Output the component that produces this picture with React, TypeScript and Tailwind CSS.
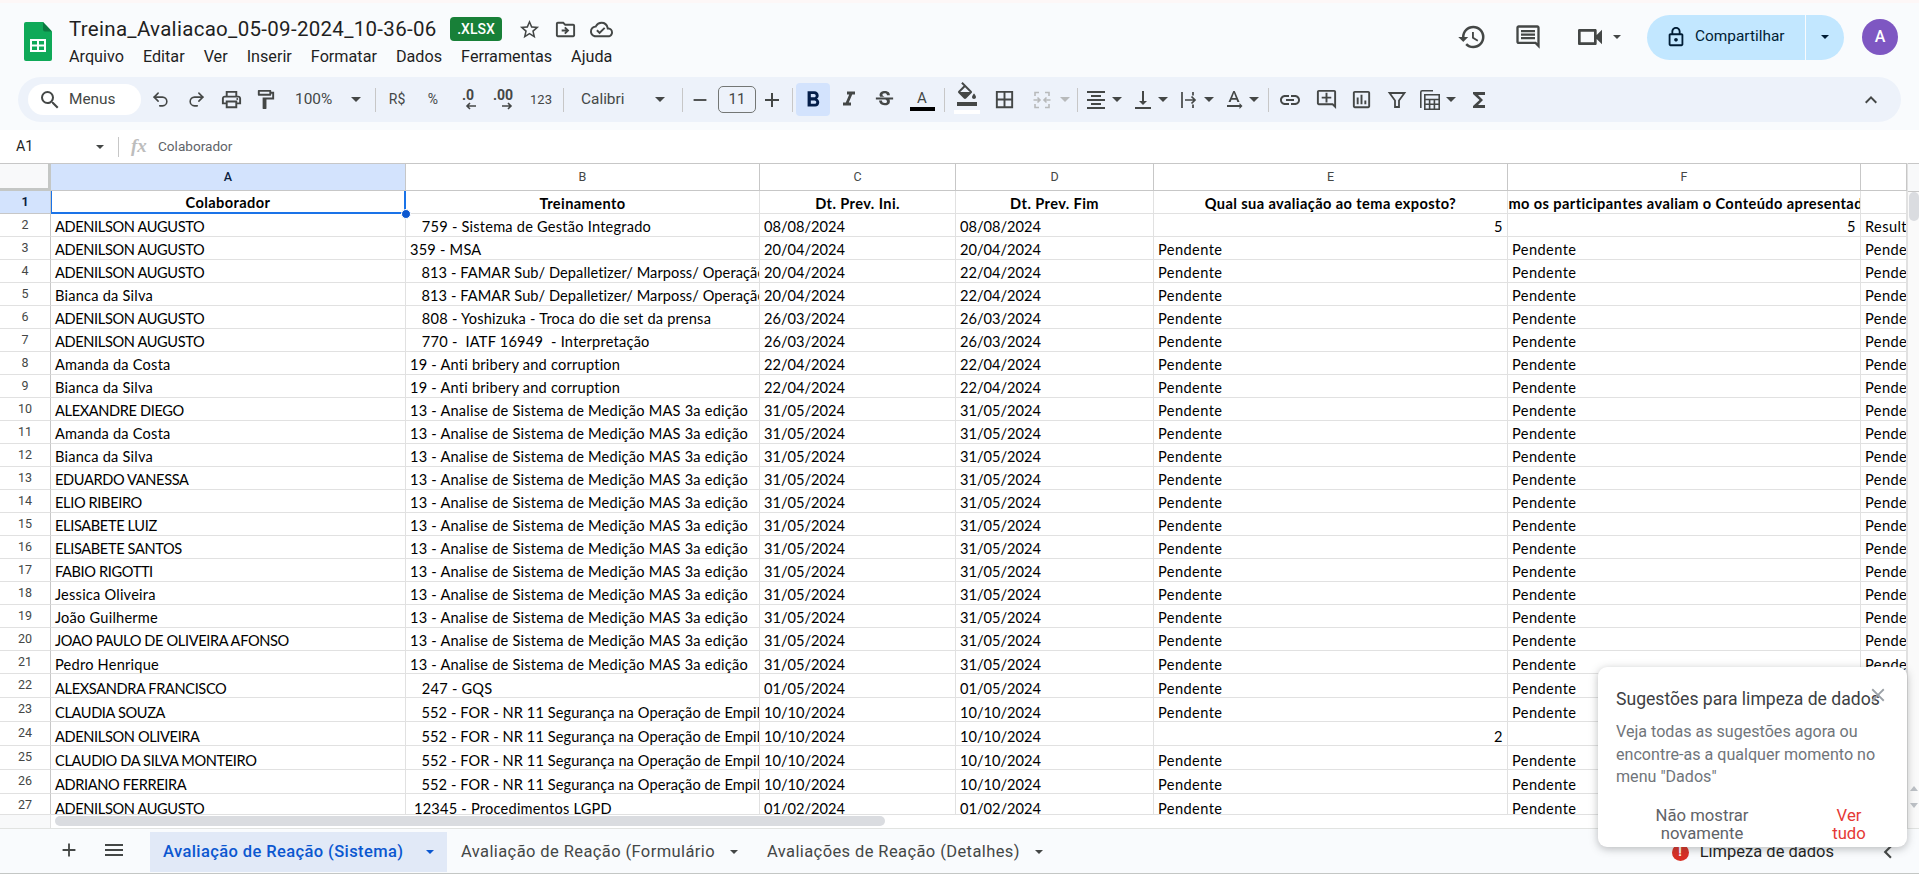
import React from "react";
import { Undo2, Redo2 } from "lucide-react";
import {
  MdSearch, MdOutlinePrint, MdOutlineFormatPaint, MdFormatBold, MdFormatItalic, MdStrikethroughS,
  MdFormatColorFill, MdBorderAll, MdFormatAlignCenter, MdVerticalAlignBottom, MdTextRotationNone,
  MdLink, MdOutlineAddComment, MdOutlineInsertChart, MdFunctions, MdKeyboardArrowUp, MdHistory,
  MdOutlineComment, MdOutlineVideocam, MdOutlineLock, MdOutlineCloudDone, MdStarBorder,
  MdOutlineDriveFileMove, MdMenu, MdAdd, MdRemove, MdClose, MdChevronLeft,
} from "react-icons/md";

const Caret = ({ className = "text-[#444746]", small = false }: { className?: string; small?: boolean }) => (
  <svg width={small ? 8 : 10} height={small ? 4 : 5} viewBox="0 0 10 5" className={className}>
    <path d="M0 0h10L5 5z" fill="currentColor" />
  </svg>
);

const Ic = ({ children, className = "" }: { children: React.ReactNode; className?: string }) => (
  <div className={`w-[24px] h-[24px] flex items-center justify-center text-[#444746] shrink-0 ${className}`}>{children}</div>
);

const Sep = ({ className }: { className: string }) => <div className={`w-px h-[24px] bg-[#c7c7c7] shrink-0 ${className}`} />;

const Logo = () => (
  <svg width="28" height="39" viewBox="0 0 28 39">
    <path d="M2 0h17l9 9.5V37a2 2 0 0 1-2 2H2a2 2 0 0 1-2-2V2a2 2 0 0 1 2-2z" fill="#0fa958" />
    <path d="M19 0l9 9.5h-7a2 2 0 0 1-2-2z" fill="#0b7a41" />
    <path d="M6 17h16v13H6z" fill="#fff" />
    <path d="M8 19h5v3.5H8zM15 19h5v3.5h-5zM8 24.5h5V28H8zM15 24.5h5V28h-5z" fill="#0fa958" />
  </svg>
);

const MergeIcon = () => (
  <svg width="22" height="22" viewBox="0 0 22 22" fill="none" stroke="#b8babb" strokeWidth="1.6">
    <path d="M4 7V3.5h4M14 3.5h4V7M4 15v3.5h4M14 18.5h4V15" />
    <path d="M2.5 11h6M6.5 8.5L9 11l-2.5 2.5M19.5 11h-6M15.5 8.5L13 11l2.5 2.5" />
  </svg>
);
const WrapIcon = () => (
  <svg width="22" height="22" viewBox="0 0 22 22" fill="none" stroke="#444746" strokeWidth="1.7">
    <path d="M4 3v16M15 3v3.5M15 15.5V19M7 11h10M13.5 7.5L17 11l-3.5 3.5" />
  </svg>
);
const FilterIcon = () => (
  <svg width="22" height="22" viewBox="0 0 22 22" fill="none" stroke="#444746" strokeWidth="1.8">
    <path d="M3.5 4h15L13 11.5V18H9v-6.5z" strokeLinejoin="miter" />
  </svg>
);
const CalcIcon = () => (
  <svg width="24" height="24" viewBox="0 0 24 24" fill="none" stroke="#444746" strokeWidth="1.6">
    <path d="M15 2.8H4.2a1.4 1.4 0 0 0-1.4 1.4V20" />
    <path d="M6.8 6.8h14.4v14.4H6.8z" />
    <path d="M6.8 11.5h14.4M6.8 16.3h14.4M11.6 11.5v9.7M16.4 11.5v9.7" />
  </svg>
);
const DecIcon = ({ label, right }: { label: string; right?: boolean }) => (
  <div className="flex flex-col items-center leading-none text-[#444746]">
    <span className="text-[14px] font-bold leading-[13px] font-['Roboto',sans-serif]">{label}</span>
    <svg width="12" height="8" viewBox="0 0 12 8" fill="none" stroke="#444746" strokeWidth="1.6" className={right ? "ml-[8px]" : "ml-[6px]"}>
      {right ? <path d="M1 4h9M7 1l3 3-3 3" /> : <path d="M11 4H2M5 1L2 4l3 3" />}
    </svg>
  </div>
);

const Toolbar = () => (
  <div className="ml-[18px] w-[1883px] h-[45px] rounded-[23px] bg-[#edf2fa] flex items-center font-['Roboto',sans-serif] text-[#444746]">
    <div className="ml-[10px] w-[113px] h-[31px] rounded-full bg-white flex items-center pl-[10px] shrink-0">
      <MdSearch size={24} className="text-[#444746]" />
      <span className="ml-[7px] text-[15.4px]">Menus</span>
    </div>
    <Ic className="ml-[7px]"><Undo2 size={19} strokeWidth={2} /></Ic>
    <Ic className="ml-[12px]"><Redo2 size={19} strokeWidth={2} /></Ic>
    <Ic className="ml-[11px]"><MdOutlinePrint size={23} /></Ic>
    <Ic className="ml-[10px]"><MdOutlineFormatPaint size={23} /></Ic>
    <span className="ml-[18px] w-[41px] text-[15.4px] shrink-0">100%</span>
    <div className="ml-[15px]"><Caret /></div>
    <Sep className="ml-[14px]" />
    <Ic className="ml-[9px] text-[14px]">R$</Ic>
    <Ic className="ml-[12px] text-[14px]">%</Ic>
    <Ic className="ml-[11px]"><DecIcon label=".0" /></Ic>
    <Ic className="ml-[11px]"><DecIcon label=".00" right /></Ic>
    <Ic className="ml-[14px] text-[13px]">123</Ic>
    <Sep className="ml-[10px]" />
    <span className="ml-[17px] w-[60px] text-[15.4px] shrink-0">Calibri</span>
    <div className="ml-[14px]"><Caret /></div>
    <Sep className="ml-[17px]" />
    <Ic className="ml-[5px]"><MdRemove size={22} /></Ic>
    <div className="ml-[6px] w-[38px] h-[27px] rounded-[5px] border border-[#747775] flex items-center justify-center text-[15px] shrink-0">11</div>
    <Ic className="ml-[4px]"><MdAdd size={24} /></Ic>
    <Sep className="ml-[8px]" />
    <div className="ml-[3px] w-[34px] h-[33px] rounded-[4px] bg-[#d3e3fd] flex items-center justify-center text-[#041e49] shrink-0"><MdFormatBold size={26} /></div>
    <Ic className="ml-[7px]"><MdFormatItalic size={25} /></Ic>
    <Ic className="ml-[11px]"><MdStrikethroughS size={23} /></Ic>
    <div className="ml-[14px] w-[24px] h-[32px] flex flex-col items-center justify-end shrink-0">
      <span className="text-[15px] leading-[17px]">A</span>
      <div className="w-[25px] h-[4px] bg-black mb-[5px] shrink-0" />
    </div>
    <Sep className="ml-[10px]" />
    <div className="ml-[10px] w-[24px] h-[34px] flex flex-col items-center shrink-0">
      <MdFormatColorFill size={24} className="-mt-[1px]" />
      <div className="w-[26px] h-[4px] bg-white mt-[4px]" />
    </div>
    <Ic className="ml-[13px]"><MdBorderAll size={23} /></Ic>
    <Ic className="ml-[14px]"><MergeIcon /></Ic>
    <div className="ml-[6px]"><Caret className="text-[#b8babb]" /></div>
    <Sep className="ml-[7px]" />
    <Ic className="ml-[6px]"><MdFormatAlignCenter size={24} /></Ic>
    <div className="ml-[4px]"><Caret /></div>
    <Ic className="ml-[9px]"><MdVerticalAlignBottom size={24} /></Ic>
    <div className="ml-[3px]"><Caret /></div>
    <Ic className="ml-[9px]"><WrapIcon /></Ic>
    <div className="ml-[3px]"><Caret /></div>
    <Ic className="ml-[8px]"><MdTextRotationNone size={24} /></Ic>
    <div className="ml-[3px]"><Caret /></div>
    <Sep className="ml-[9px]" />
    <Ic className="ml-[9px]"><MdLink size={24} /></Ic>
    <Ic className="ml-[12px]"><MdOutlineAddComment size={23} /></Ic>
    <Ic className="ml-[11px]"><MdOutlineInsertChart size={23} /></Ic>
    <Ic className="ml-[12px]"><FilterIcon /></Ic>
    <Ic className="ml-[9px]"><CalcIcon /></Ic>
    <div className="ml-[4px]"><Caret /></div>
    <Ic className="ml-[11px]"><MdFunctions size={24} /></Ic>
    <Ic className="ml-auto mr-[18px]"><MdKeyboardArrowUp size={24} /></Ic>
  </div>
);

const menu = ["Arquivo", "Editar", "Ver", "Inserir", "Formatar", "Dados", "Ferramentas", "Ajuda"];

const Header = () => (
  <div className="h-[130px] shrink-0 bg-[#f9fbfd] font-['Roboto',sans-serif]">
    <div className="h-[3px] bg-[#fdf7f7]" />
    <div className="h-[74px] flex relative">
      <div className="ml-[24px] mt-[19px] shrink-0"><Logo /></div>
      <div className="ml-[17px] mt-[13px]">
        <div className="flex items-center h-[26px]">
          <span className="text-[20.5px] tracking-[0.3px] text-[#1f1f1f] w-[367px] whitespace-nowrap leading-none">Treina_Avaliacao_05-09-2024_10-36-06</span>
          <span className="ml-[14px] w-[52px] h-[24px] rounded-[4px] bg-[#188038] text-white text-[14px] font-medium flex items-center justify-center">.XLSX</span>
          <MdStarBorder size={23} className="ml-[16px] text-[#444746]" />
          <MdOutlineDriveFileMove size={23} className="ml-[13px] text-[#444746]" />
          <MdOutlineCloudDone size={23} className="ml-[13px] text-[#444746]" />
        </div>
        <div className="flex gap-[19px] mt-[5px] text-[16.2px] leading-[20px] text-[#1f1f1f]">
          {menu.map((m) => <span key={m}>{m}</span>)}
        </div>
      </div>
      <div className="ml-auto flex items-center h-[74px] -mt-[3px] text-[#444746]">
        <MdHistory size={30} />
        <MdOutlineComment size={28} className="ml-[27px]" />
        <MdOutlineVideocam size={32} className="ml-[32px]" />
        <div className="ml-[7px]"><Caret small /></div>
        <div className="ml-[26px] w-[197px] h-[45px] rounded-full bg-[#c2e7ff] flex items-center text-[#001d35]">
          <MdOutlineLock size={22} className="ml-[18px]" />
          <span className="ml-[8px] text-[15.4px] w-[102px] whitespace-nowrap">Compartilhar</span>
          <div className="ml-[8px] w-px h-[45px] bg-[#f9fbfd]" />
          <div className="ml-[15px]"><Caret small className="text-[#001d35]" /></div>
        </div>
        <div className="ml-[18px] mr-[21px] w-[36px] h-[36px] rounded-full bg-[#7e57c2] text-white text-[16px] font-medium flex items-center justify-center">A</div>
      </div>
    </div>
    <Toolbar />
  </div>
);

const FormulaBar = () => (
  <div className="h-[33px] shrink-0 bg-white flex items-center font-['Roboto',sans-serif]">
    <span className="ml-[16px] w-[80px] text-[14.3px] text-[#1f1f1f]">A1</span>
    <Caret small />
    <div className="ml-[14px] w-px h-[20px] bg-[#c7c7c7]" />
    <span className="ml-[12px] w-[27px] font-['Liberation_Serif',serif] italic font-bold text-[19px] text-[#bdbdbd]">fx</span>
    <span className="text-[13.6px] text-[#5f6368]">Colaborador</span>
  </div>
);

const p = "Pendente";
const B13 = "13 - Analise de Sistema de Medição MAS 3a edição";
const B813 = "   813 - FAMAR Sub/ Depalletizer/ Marposs/ Operação de Máquinas";
const B552 = "   552 - FOR - NR 11 Segurança na Operação de Empilhadeiras";
const B19 = "19 - Anti bribery and corruption";
type R = [string, string, string, string, string?, string?, string?];
const rows: R[] = [
  ["ADENILSON AUGUSTO", "   759 - Sistema de Gestão Integrado", "08/08/2024", "08/08/2024", "5", "5", "Resultado"],
  ["ADENILSON AUGUSTO", "359 - MSA", "20/04/2024", "20/04/2024"],
  ["ADENILSON AUGUSTO", B813, "20/04/2024", "22/04/2024"],
  ["Bianca da Silva", B813, "20/04/2024", "22/04/2024"],
  ["ADENILSON AUGUSTO", "   808 - Yoshizuka - Troca do die set da prensa", "26/03/2024", "26/03/2024"],
  ["ADENILSON AUGUSTO", "   770 -  IATF 16949  - Interpretação", "26/03/2024", "26/03/2024"],
  ["Amanda da Costa", B19, "22/04/2024", "22/04/2024"],
  ["Bianca da Silva", B19, "22/04/2024", "22/04/2024"],
  ...["ALEXANDRE DIEGO", "Amanda da Costa", "Bianca da Silva", "EDUARDO VANESSA", "ELIO RIBEIRO", "ELISABETE LUIZ", "ELISABETE SANTOS", "FABIO RIGOTTI", "Jessica Oliveira", "João Guilherme", "JOAO PAULO DE OLIVEIRA AFONSO", "Pedro Henrique"].map((n): R => [n, B13, "31/05/2024", "31/05/2024"]),
  ["ALEXSANDRA FRANCISCO", "   247 - GQS", "01/05/2024", "01/05/2024"],
  ["CLAUDIA SOUZA", B552, "10/10/2024", "10/10/2024"],
  ["ADENILSON OLIVEIRA", B552, "10/10/2024", "10/10/2024", "2", "", ""],
  ["CLAUDIO DA SILVA MONTEIRO", B552, "10/10/2024", "10/10/2024"],
  ["ADRIANO FERREIRA", B552, "10/10/2024", "10/10/2024"],
  ["ADENILSON AUGUSTO", " 12345 - Procedimentos LGPD", "01/02/2024", "01/02/2024"],
];

const widths = ["w-[355px]", "w-[354px]", "w-[196px]", "w-[198px]", "w-[354px]", "w-[353px]", "w-[46px]"];
const letters = ["A", "B", "C", "D", "E", "F", ""];
const headers = ["Colaborador", "Treinamento", "Dt. Prev. Ini.", "Dt. Prev. Fim", "Qual sua avaliação ao tema exposto?", "Como os participantes avaliam o Conteúdo apresentado?", ""];
const cellFont = "font-['Lato','Carlito',sans-serif] text-[14.6px] text-black";

const track = (v: string, i: number) => {
  if (i === 2 || i === 3) return "";
  if (i === 0) return v === v.toUpperCase() ? "tracking-[-0.37px]" : "tracking-[0.22px]";
  if (i === 1) return v === B552 || v === B813 ? "tracking-[0.08px]" : "tracking-[0.22px]";
  return "tracking-[0.42px]";
};

const Grid = () => (
  <div className="flex-1 min-w-0 flex flex-col">
    <div className="flex-1 min-h-0 overflow-hidden">
      <div className="flex h-[28px] border-t border-[#c7c7c7] font-['Roboto',sans-serif] text-[12.5px] text-[#444746]">
        <div className="w-[51px] shrink-0 bg-[#f8f9fa] border-r-[3px] border-b-[3px] border-[#c4c7c5]" />
        {letters.map((l, i) => (
          <div key={i} className={`${widths[i]} shrink-0 flex items-center justify-center border-r border-b border-[#c7c7c7] ${i === 0 ? "bg-[#d3e3fd] font-medium text-[#0b1e3f]" : "bg-white"}`}>{l}</div>
        ))}
      </div>
      <div className="flex h-[23px]">
        <div className="w-[51px] shrink-0 bg-[#d3e3fd] border-r border-b border-[#c7c7c7] flex items-center justify-center font-['Roboto',sans-serif] text-[12.5px] font-bold text-[#0b1e3f]">1</div>
        {headers.map((h, i) => (
          <div key={i} className={`${widths[i]} relative shrink-0`}>
            <div className={`absolute inset-0 flex justify-center items-end overflow-hidden whitespace-nowrap font-bold tracking-[0.4px] ${cellFont} ${i === 0 ? "border-l border-r-2 border-b-2 border-[#1a73e8] z-10" : "border-r border-b border-[#e1e1e1]"}`}>
              <span className="shrink-0 leading-[18px]">{h}</span>
            </div>
            {i === 0 && <div className="absolute -right-[5px] -bottom-[5px] w-[10px] h-[10px] rounded-full bg-[#0b57d0] border border-white z-20" />}
          </div>
        ))}
      </div>
      {rows.map((r, idx) => {
        const n = idx + 2;
        const vals = [r[0], r[1], r[2], r[3], r[4] ?? p, r[5] ?? p, r[6] ?? p];
        return (
          <div key={n} className={`flex ${n >= 22 ? "h-[24px]" : "h-[23px]"}`}>
            <div className="w-[51px] shrink-0 border-r border-b border-r-[#c7c7c7] border-b-[#e1e1e1] flex items-center justify-center font-['Roboto',sans-serif] text-[12.5px] text-[#444746]">{n}</div>
            {vals.map((v, i) => {
              const num = (i === 4 || i === 5) && /^\d$/.test(v);
              return (
                <div key={i} className={`${widths[i]} shrink-0 border-r border-b border-[#e1e1e1] px-[4px] flex items-end overflow-hidden whitespace-pre ${cellFont} ${track(v, i)} ${num ? "justify-end" : ""}`}>
                  <span className={n >= 21 ? "leading-[16px]" : "leading-[18px]"}>{v}</span>
                </div>
              );
            })}
          </div>
        );
      })}
    </div>
    <div className="h-[14px] shrink-0 flex border-t border-[#e1e1e1] bg-white">
      <div className="w-[51px] shrink-0 bg-[#f8f9fa] border-r border-[#e1e1e1]" />
      <div className="ml-[4px] mt-[1px] w-[830px] h-[10px] rounded-full bg-[#dadce0]" />
    </div>
  </div>
);

const VScroll = () => (
  <div className="w-[12px] shrink-0 flex flex-col bg-[#fafafa] border-l border-[#e1e1e1]">
    <div className="h-[29px] bg-[#f8f9fa] border-t border-b border-[#c7c7c7]" />
    <div className="ml-[1px] w-[10px] h-[29px] rounded-full bg-[#dadce0]" />
    <div className="mt-auto mb-[20px] flex flex-col items-center gap-[12px]">
      <svg width="8" height="5" viewBox="0 0 8 5"><path d="M4 0l4 5H0z" fill="#bdc1c6" /></svg>
      <svg width="8" height="5" viewBox="0 0 8 5"><path d="M0 0h8L4 5z" fill="#bdc1c6" /></svg>
    </div>
  </div>
);

const Tabs = () => (
  <div className="h-[46px] shrink-0 bg-[#f9fbfd] border-t border-b border-b-[#c4c7c5] border-t-[#e1e3e1] flex items-start font-['Roboto',sans-serif] text-[16.5px] tracking-[0.4px] text-[#444746]">
    <MdAdd size={22} className="ml-[58px] mt-[10px] shrink-0" />
    <MdMenu size={24} className="ml-[22px] mt-[9px] shrink-0" />
    <div className="ml-[24px] mt-[3px] w-[297px] h-[40px] bg-[#e1e9f7] flex items-center text-[#0b57d0] font-medium shrink-0">
      <span className="ml-[13px] w-[250px] whitespace-nowrap">Avaliação de Reação (Sistema)</span>
      <span className="ml-[13px]"><Caret small className="text-[#0b57d0]" /></span>
    </div>
    <div className="h-[40px] mt-[3px] flex items-center shrink-0">
      <span className="ml-[14px] w-[256px] whitespace-nowrap">Avaliação de Reação (Formulário</span>
      <span className="ml-[13px]"><Caret small /></span>
    </div>
    <div className="h-[40px] mt-[3px] flex items-center shrink-0">
      <span className="ml-[29px] w-[255px] whitespace-nowrap">Avaliações de Reação (Detalhes)</span>
      <span className="ml-[13px]"><Caret small /></span>
    </div>
    <div className="ml-auto h-[46px] flex items-center">
      <div className="w-[17px] h-[17px] rounded-full bg-[#d93025] text-white text-[13px] font-bold flex items-center justify-center">!</div>
      <span className="ml-[11px] text-[#1f1f1f] tracking-normal whitespace-nowrap">Limpeza de dados</span>
      <MdChevronLeft size={26} className="ml-[41px] mr-[18px]" />
    </div>
  </div>
);

const Popup = () => (
  <div className="absolute left-[1598px] top-[667px] w-[309px] h-[180px] bg-white rounded-[9px] shadow-[0_2px_8px_rgba(60,64,67,0.35)] pl-[18px] pt-[20px] font-['Roboto',sans-serif] z-30">
    <div className="text-[17.6px] leading-[24px] text-[#3c4043] whitespace-nowrap">Sugestões para limpeza de dados</div>
    <MdClose size={22} className="absolute left-[269px] top-[17px] text-[#9aa0a6]" />
    <div className="mt-[10px] w-[285px] text-[16.1px] leading-[22.5px] text-[#70757a]">Veja todas as sugestões agora ou encontre-as a qualquer momento no menu "Dados"</div>
    <div className="flex mt-[18px] -ml-[18px] text-[16.7px] leading-[18px] text-center">
      <div className="ml-[28px] w-[152px] text-[#5f6368]">Não mostrar novamente</div>
      <div className="ml-[49px] w-[44px] text-[#e53935]">Ver tudo</div>
    </div>
  </div>
);

export default function App() {
  return (
    <div className="relative w-full h-[874px] overflow-hidden flex flex-col bg-white">
      <Header />
      <FormulaBar />
      <div className="flex-1 min-h-0 flex">
        <Grid />
        <VScroll />
      </div>
      <Tabs />
      <Popup />
    </div>
  );
}
